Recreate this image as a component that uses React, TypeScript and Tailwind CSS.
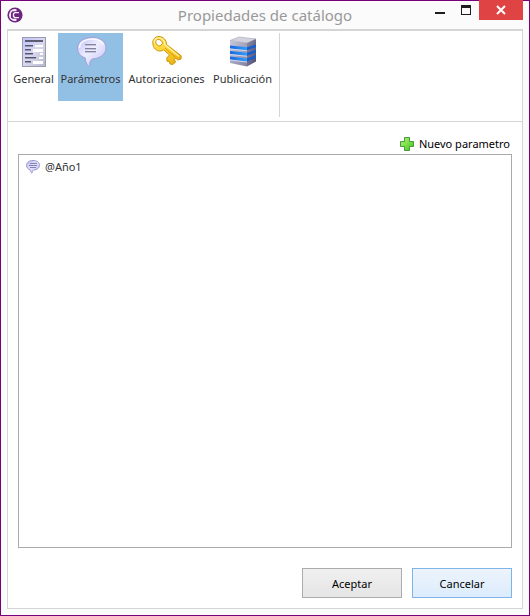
import React from "react";

function AppLogo() {
  return (
    <svg width="16" height="16" viewBox="0 0 16 16" aria-hidden="true">
      <circle cx="8" cy="8" r="7.6" fill="#6d2580" />
      <path d="M9.500 2.200a6 6 0 1 0 0 11.600z" fill="#f3ebf6" />
      <path d="M5.500 4.200h7.300v7.600H5.500L4 10.300V5.700z" fill="#6d2580" />
      <path d="M12 5.600H7.800L6.500 6.800v2.600l1.300 1.200H12" fill="none" stroke="#f6effa" strokeWidth="1.400" />
    </svg>
  );
}

function FormIcon() {
  return (
    <svg width="32" height="32" viewBox="0 0 32 32" aria-hidden="true">
      <defs>
        <linearGradient id="form" x1="0" y1="0" x2="1" y2="1">
          <stop offset="0" stopColor="#c0c0fa" />
          <stop offset="0.5" stopColor="#d8d9f0" />
          <stop offset="1" stopColor="#b4b7c8" />
        </linearGradient>
      </defs>
      <rect x="4.500" y="2.500" width="23" height="29" fill="url(#form)" stroke="#9a9cac" />
      <path d="M7 5h18v2H7z" fill="#5c5d73" />
      <path d="M17 10h8v2h-8zM15 14h10v3H15zM22 18h3v2h-3zM21 22h4v2h-4zM15 26h10v3H15z" fill="#fff" />
      <path d="M7 10h8v1H7zM7 14h6v1H7zM7 18h8v1H7zM7 22h11v1H7zM7 26h6v1H7z" fill="#55566c" />
      <path d="M7 11h8v1H7zM7 15h6v1H7zM7 19h8v1H7zM7 23h11v1H7zM7 27h6v1H7z" fill="#9899ae" />
    </svg>
  );
}

function BubbleIcon() {
  return (
    <svg width="32" height="32" viewBox="0 0 32 32" aria-hidden="true">
      <defs>
        <linearGradient id="bubble" x1="0" y1="0" x2="1" y2="1">
          <stop offset="0" stopColor="#c0bff8" />
          <stop offset="0.450" stopColor="#eeeeff" />
          <stop offset="1" stopColor="#c3c1f8" />
        </linearGradient>
      </defs>
      <path
        d="M17 2.500C8.500 2.500 2.500 7 2.500 13c0 5 3.200 8.500 7.700 9.800.3 3.700 1.200 6.200 3.300 8.200.8.600 1.500.1 1.300-.8-.4-2.200.3-4.200 2.200-6.200C25 23.800 31 19 31 13S25 2.500 17 2.500z"
        fill="url(#bubble)"
        stroke="#a19fd8"
      />
      <path d="M4.500 13c0-5.500 5.500-9 12.500-9 6 0 10 2.300 11.500 5.500" fill="none" stroke="#fff" strokeWidth="1.600" opacity="0.800" />
      <path d="M10 9h11v1H10zM10 13h11v1H10zM10 16h11v1H10z" fill="#85839f" />
      <path d="M10 10h11v1H10zM10 14h11v1H10zM10 17h11v1H10z" fill="#c4c3dc" />
    </svg>
  );
}

function SmallBubbleIcon() {
  return (
    <svg width="16" height="16" viewBox="0 0 16 16" aria-hidden="true">
      <defs>
        <linearGradient id="small-bubble" x1="0" y1="0" x2="1" y2="1">
          <stop offset="0" stopColor="#b9b8f2" />
          <stop offset="0.500" stopColor="#e4e3fd" />
          <stop offset="1" stopColor="#adabeb" />
        </linearGradient>
      </defs>
      <path
        d="M8 1.500c-4 0-6.500 2-6.500 4.800 0 2.300 1.500 4 3.700 4.500.2 1.500.7 2.600 1.800 3.400.3-1.200.3-2.200 1.500-3.200 3.700-.2 6-2 6-4.700 0-2.800-2.500-4.800-6.500-4.800z"
        fill="url(#small-bubble)"
        stroke="#9c9ace"
      />
      <path d="M5 4.500h7M4 6.500h8M5 8.500h6" stroke="#8583b4" />
    </svg>
  );
}

function KeyIcon() {
  return (
    <svg width="32" height="32" viewBox="0 0 32 32" aria-hidden="true">
      <defs>
        <linearGradient id="key" x1="0" y1="0" x2="1" y2="1">
          <stop offset="0" stopColor="#ffe36a" />
          <stop offset="0.500" stopColor="#fdd32c" />
          <stop offset="1" stopColor="#e3a50c" />
        </linearGradient>
      </defs>
      <path
        fillRule="evenodd"
        d="M8 1.500C4 1.500 1.500 4.500 1.800 8.500c.4 4.500 3.500 7.500 7.200 7.500 1.500 0 2.800-.5 3.700-1.200l5.800 5.200-2.700 3 .2 3.200 2.500.3.500 2.500 3 .5 2.500-2.500-1.200-2.500 1.500-1.300 2 1.800 3.200-1 .2-3.200L15.500 9.500c.2-4.200-3.300-8-7.500-8zM6.500 4.500c2.500-.5 4.800 1.500 5 4L9 11c-2.200 0-4-1.700-4.200-3.700-.1-1.200.5-2.400 1.700-2.800z"
        fill="url(#key)"
        stroke="#cf9609"
        strokeLinejoin="round"
      />
      <path d="M3.300 8C3 5 5 3 7.800 3c3.200 0 6 2.800 6 6.500L28 21.500" fill="none" stroke="#fff3ae" strokeWidth="1.200" />
      <path d="M14 13l10.500 9.500" stroke="#d79d0b" strokeWidth="1" />
    </svg>
  );
}

function ServerIcon() {
  return (
    <svg width="32" height="32" viewBox="0 0 32 32" aria-hidden="true">
      <defs>
        <linearGradient id="front" x1="0" y1="0" x2="1" y2="1">
          <stop offset="0" stopColor="#c9c9da" />
          <stop offset="1" stopColor="#8282a0" />
        </linearGradient>
        <linearGradient id="side" x1="0" y1="0" x2="1" y2="1">
          <stop offset="0" stopColor="#8e8eaa" />
          <stop offset="1" stopColor="#4b4b70" />
        </linearGradient>
        <linearGradient id="band" x1="0" y1="0" x2="1" y2="0">
          <stop offset="0" stopColor="#1766e0" />
          <stop offset="1" stopColor="#2fa0ff" />
        </linearGradient>
      </defs>
      <path d="M3 5.500 12 2l17 2-9 4z" fill="#d3d3e0" stroke="#a3a3b5" strokeWidth="0.600" />
      <path d="M3 5.500 20 8v23.500L3 28z" fill="url(#front)" />
      <path d="M20 8l9-4v22.500l-9 5z" fill="url(#side)" />
      <path d="M3 10.500l17 1.800v3L3 13.500zM3 16l17 1.800v3L3 19zM3 21.500l17 2v3l-17-2z" fill="url(#band)" />
      <path d="M20 12.300l9-2.800v2.700l-9 3.100zM20 17.800l9-3v2.700l-9 3.300zM20 23.500l9-3.500v2.700l-9 3.800z" fill="#1a5fc8" />
      <path d="M3 14l17 1.800M3 19.500l17 1.800M3 25l17 2" stroke="#d3dcf3" strokeWidth="0.900" />
    </svg>
  );
}

function PlusIcon() {
  return (
    <svg width="16" height="16" viewBox="0 0 16 16" aria-hidden="true">
      <defs>
        <linearGradient id="plus" x1="0" y1="0" x2="1" y2="1">
          <stop offset="0" stopColor="#b5f08a" />
          <stop offset="0.500" stopColor="#7be045" />
          <stop offset="1" stopColor="#45bb25" />
        </linearGradient>
      </defs>
      <path d="M5.500 1.500h5v4h4v5h-4v4h-5v-4h-4v-5h4z" fill="url(#plus)" stroke="#469a3c" strokeLinejoin="round" />
    </svg>
  );
}

const tabs = [
  { label: "General", width: "w-[47px]", icon: <FormIcon /> },
  { label: "Parámetros", width: "w-[65px]", icon: <BubbleIcon /> },
  { label: "Autorizaciones", width: "w-[85px]", icon: <KeyIcon /> },
  { label: "Publicación", width: "w-[65px]", icon: <ServerIcon /> },
];

export default function App() {
  const [active, setActive] = React.useState("Parámetros");
  return (
    <div className="flex min-h-screen flex-col border border-[#78007a] bg-[#fbfbfb] px-1.5 pb-1.5 font-['Noto_Sans',sans-serif] text-[11px] leading-4 text-[#333]">
      <header className="grid h-7 grid-cols-[1fr_auto_1fr] items-start">
        <div className="pt-1.5">
          <AppLogo />
        </div>
        <h1 className="pt-0.5 text-[15px] leading-6 text-[#999]">Propiedades de catálogo</h1>
        <div className="-mt-px flex justify-end">
          <button type="button" aria-label="Minimizar" className="flex h-5 w-[26px] items-center justify-center">
            <svg width="10" height="10" viewBox="0 0 10 10">
              <path d="M0 7h10v2H0z" fill="#1e1e1e" />
            </svg>
          </button>
          <button type="button" aria-label="Maximizar" className="flex h-5 w-[26px] items-center justify-center">
            <svg width="10" height="10" viewBox="0 0 10 10">
              <path fillRule="evenodd" d="M0 0h10v10H0zM1 3v6h8V3z" fill="#1e1e1e" />
            </svg>
          </button>
          <button type="button" aria-label="Cerrar" className="flex h-5 w-11 items-center justify-center bg-[#e04343]">
            <svg width="10" height="10" viewBox="0 0 10 10">
              <path d="M1 1l8 8M9 1L1 9" stroke="#fff" strokeWidth="2" />
            </svg>
          </button>
        </div>
      </header>

      <main className="flex flex-1 flex-col border border-t-2 border-[#d5d5d5] bg-white">
        <div className="flex border-b border-[#d5d5d5] px-0.5 pt-0.5 pb-1">
          <div role="tablist" className="flex gap-px border-r border-[#d5d5d5] pr-1 pb-4">
            {tabs.map((tab) => (
              <button
                key={tab.label}
                type="button"
                role="tab"
                aria-selected={active === tab.label}
                onClick={() => setActive(tab.label)}
                className={`flex h-[68px] flex-col items-center gap-1 whitespace-nowrap pt-0.5 ${tab.width} ${
                  active === tab.label ? "bg-[#92c0e4]" : ""
                }`}
              >
                {tab.icon}
                <span>{tab.label}</span>
              </button>
            ))}
          </div>
        </div>

        <div className="flex flex-1 flex-col px-2.5 pt-3.5 pb-2.5">
          <button type="button" className="mb-0.5 flex items-center gap-1 self-end pr-0.5 text-black">
            <PlusIcon />
            Nuevo parametro
          </button>
          <ul className="flex-1 border border-[#aaa] p-1 px-1.5">
            <li className="flex items-center gap-1">
              <SmallBubbleIcon />
              @Año1
            </li>
          </ul>
          <div className="mt-5 flex justify-end gap-2.5">
            <button
              type="button"
              className="h-[30px] w-[100px] border border-[#acacac] bg-linear-to-b from-[#f0f0f0] to-[#e5e5e5] pt-0.5 text-black"
            >
              Aceptar
            </button>
            <button
              type="button"
              className="h-[30px] w-[100px] border border-[#7eb4ea] bg-linear-to-b from-[#ecf4fc] to-[#dcecfc] pt-0.5 text-black"
            >
              Cancelar
            </button>
          </div>
        </div>
      </main>
    </div>
  );
}
